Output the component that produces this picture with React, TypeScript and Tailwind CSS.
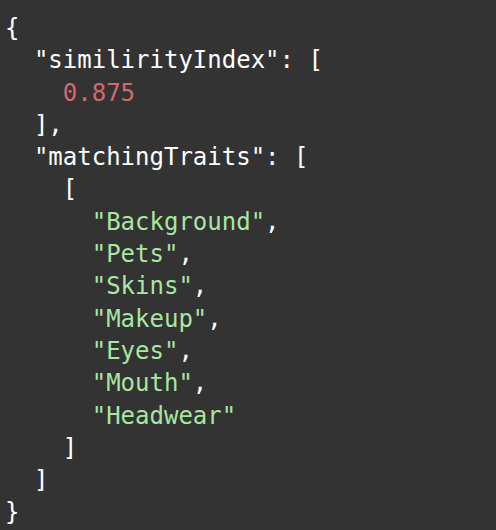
import React from "react";

const W = ({ children }: { children: React.ReactNode }) => <span className="text-white">{children}</span>;
const S = ({ children }: { children: React.ReactNode }) => <span className="text-[#a8e6a1]">{children}</span>;
const N = ({ children }: { children: React.ReactNode }) => <span className="text-[#d4696b]">{children}</span>;

export default function App() {
  const traits = ["Background", "Pets", "Skins", "Makeup", "Eyes", "Mouth", "Headwear"];
  return (
    <div className="w-[496px] h-[530px] bg-[#333333] overflow-hidden">
      <pre
        className="m-0 pl-[5px] pt-[12px] text-[24px] leading-[32.3px] text-white"
        style={{ fontFamily: '"DejaVu Sans Mono", monospace' }}
      >
        <W>{"{"}</W>{"\n"}
        <W>{'  "similirityIndex": ['}</W>{"\n"}
        {"    "}<N>0.875</N>{"\n"}
        <W>{"  ],"}</W>{"\n"}
        <W>{'  "matchingTraits": ['}</W>{"\n"}
        <W>{"    ["}</W>{"\n"}
        {traits.map((t, i) => (
          <React.Fragment key={t}>
            {"      "}<S>{`"${t}"`}</S>{i < traits.length - 1 ? <W>,</W> : null}{"\n"}
          </React.Fragment>
        ))}
        <W>{"    ]"}</W>{"\n"}
        <W>{"  ]"}</W>{"\n"}
        <W>{"}"}</W>
      </pre>
    </div>
  );
}
